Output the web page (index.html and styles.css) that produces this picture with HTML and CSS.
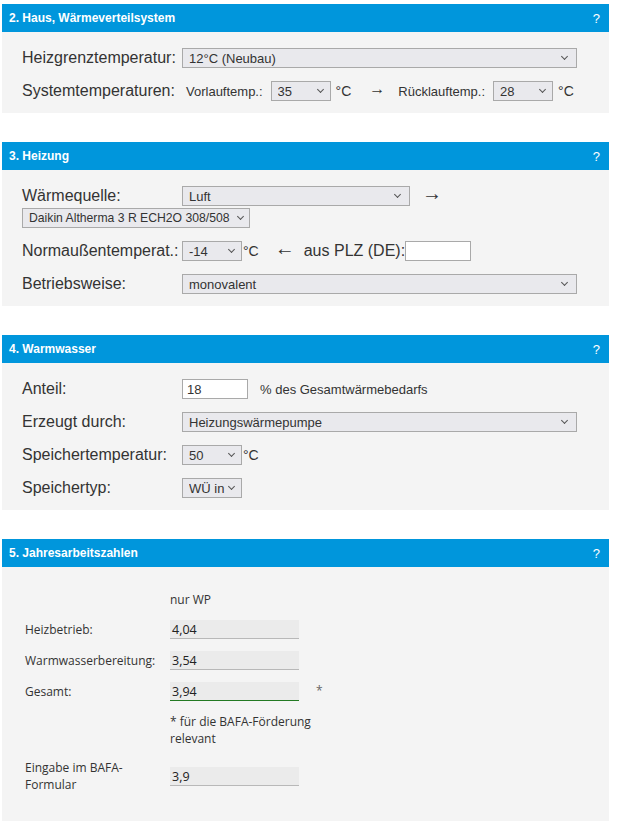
FILE: index.html
```html
<!DOCTYPE html>
<html lang="de">

<head>
  <meta charset="UTF-8" />
  <meta name="viewport" content="width=device-width, initial-scale=1.0" />
  <title>Wärmepumpen-Rechner</title>
  <link rel="stylesheet" href="styles.css">
</head>

<body>
  <div class="panel">
    <div class="panel-head"><span>2. Haus, Wärmeverteilsystem</span><span class="help">?</span></div>
    <div class="panel-body">
      <div class="row">
        <label class="lbl" for="heizgrenze">Heizgrenztemperatur:</label>
        <span class="sel w-full"><select id="heizgrenze"><option>12°C (Neubau)</option></select></span>
      </div>
      <div class="row">
        <span class="lbl">Systemtemperaturen:</span>
        <label class="sub first" for="vorlauf">Vorlauftemp.:</label>
        <span class="sel w-small"><select id="vorlauf"><option>35</option></select></span>
        <span class="unit">°C</span>
        <span class="arrow small">→</span>
        <label class="sub" for="ruecklauf">Rücklauftemp.:</label>
        <span class="sel w-small"><select id="ruecklauf"><option>28</option></select></span>
        <span class="unit">°C</span>
      </div>
    </div>
  </div>

  <div class="panel">
    <div class="panel-head"><span>3. Heizung</span><span class="help">?</span></div>
    <div class="panel-body">
      <div class="row tight">
        <label class="lbl" for="quelle">Wärmequelle:</label>
        <span class="sel w-mid"><select id="quelle"><option>Luft</option></select></span>
        <span class="arrow right">→</span>
      </div>
      <div class="row model">
        <span class="sel w-mid"><select><option>Daikin Altherma 3 R ECH2O 308/508</option></select></span>
      </div>
      <div class="row">
        <label class="lbl" for="nat">Normaußentemperat.:</label>
        <span class="sel w-small"><select id="nat"><option>-14</option></select></span>
        <span class="unit tight">°C</span>
        <span class="arrow left">←</span>
        <label class="plz" for="plz">aus PLZ (DE):</label>
        <input class="txt" type="text" id="plz" />
      </div>
      <div class="row">
        <label class="lbl" for="betrieb">Betriebsweise:</label>
        <span class="sel w-full"><select id="betrieb"><option>monovalent</option></select></span>
      </div>
    </div>
  </div>

  <div class="panel">
    <div class="panel-head"><span>4. Warmwasser</span><span class="help">?</span></div>
    <div class="panel-body">
      <div class="row">
        <label class="lbl" for="anteil">Anteil:</label>
        <input class="txt" type="text" id="anteil" value="18" />
        <span class="note">% des Gesamtwärmebedarfs</span>
      </div>
      <div class="row">
        <label class="lbl" for="erzeugt">Erzeugt durch:</label>
        <span class="sel w-full"><select id="erzeugt"><option>Heizungswärmepumpe</option></select></span>
      </div>
      <div class="row">
        <label class="lbl" for="speichertemp">Speichertemperatur:</label>
        <span class="sel w-small"><select id="speichertemp"><option>50</option></select></span>
        <span class="unit tight">°C</span>
      </div>
      <div class="row">
        <label class="lbl" for="speichertyp">Speichertyp:</label>
        <span class="sel w-small"><select id="speichertyp"><option>WÜ in</option></select></span>
      </div>
    </div>
  </div>

  <div class="panel">
    <div class="panel-head"><span>5. Jahresarbeitszahlen</span><span class="help">?</span></div>
    <div class="panel-body jaz">
      <span></span>
      <span class="jaz-head">nur WP</span>
      <span></span>

      <span class="jaz-lbl">Heizbetrieb:</span>
      <span class="jaz-val">4,04</span>
      <span></span>

      <span class="jaz-lbl">Warmwasserbereitung:</span>
      <span class="jaz-val">3,54</span>
      <span></span>

      <span class="jaz-lbl">Gesamt:</span>
      <span class="jaz-val total">3,94</span>
      <span class="star">*</span>

      <span></span>
      <span class="jaz-note">* für die BAFA-Förderung relevant</span>

      <span class="jaz-lbl">Eingabe im BAFA-Formular</span>
      <span class="jaz-val">3,9</span>
      <span></span>
    </div>
  </div>
</body>

</html>
```

FILE: styles.css
```css
body {
  margin: 4px 10px 0 2px;
  background: #fff;
  color: #333;
  font-family: "Liberation Sans", Arial, sans-serif;
}

.panel {
  width: 607px;
  margin-bottom: 29px;
  background: #f4f4f4;
}

.panel-head {
  display: flex;
  justify-content: space-between;
  align-items: center;
  height: 28px;
  padding: 0 9px 0 7px;
  background: #0096dc;
  color: #fff;
  font-size: 12px;
  font-weight: bold;
}

.panel-head .help {
  font-size: 13px;
  font-weight: normal;
}

.panel-body {
  padding: 16px 20px 12px 20px;
}

.row {
  display: flex;
  align-items: center;
  height: 20px;
  margin-bottom: 13px;
}

.row:last-child {
  margin-bottom: 0;
}

.row.tight {
  margin-bottom: 2px;
}

.lbl {
  width: 160px;
  flex-shrink: 0;
  font-size: 16px;
  color: #333;
}

.sub {
  font-size: 13px;
  margin-right: 8px;
}

.sub.first {
  margin-left: 4px;
}

.sel {
  position: relative;
  display: inline-block;
  height: 20px;
}

.sel::after {
  content: "";
  position: absolute;
  right: 10px;
  top: 50%;
  width: 4px;
  height: 4px;
  margin-top: -4px;
  border-right: 1px solid #555;
  border-bottom: 1px solid #555;
  transform: rotate(45deg);
  pointer-events: none;
}

.sel select {
  appearance: none;
  -webkit-appearance: none;
  box-sizing: border-box;
  width: 100%;
  height: 20px;
  margin: 0;
  padding: 0 20px 0 6px;
  border: 1px solid #a9a9a9;
  border-radius: 0;
  background: #e9e9ed;
  color: #333;
  font-family: "Liberation Sans", Arial, sans-serif;
  font-size: 13px;
}

.w-full {
  width: 395px;
}

.w-mid {
  width: 228px;
}

.w-small {
  width: 60px;
}

.w-small::after {
  right: 8px;
}

.w-small select {
  padding-right: 14px;
}

.row.model .sel::after {
  right: 7px;
}

.row.model .sel select {
  padding: 0 14px 0 6px;
  font-size: 12.2px;
}

.unit {
  margin-left: 5px;
  font-size: 14px;
}

.unit.tight {
  margin-left: 1px;
}

.arrow {
  font-family: "Liberation Sans", Arial, sans-serif;
  font-size: 20px;
  line-height: 20px;
  padding-bottom: 6px;
  color: #333;
}

.arrow.small {
  font-size: 16px;
  padding-bottom: 4px;
  margin: 0 13px 0 18px;
}

.arrow.right {
  margin-left: 12px;
}

.arrow.left {
  margin: 0 9px 0 16px;
}

.plz {
  font-size: 16px;
}

.txt {
  box-sizing: border-box;
  width: 66px;
  height: 20px;
  margin: 0;
  padding: 0 4px;
  border: 1px solid #a9a9a9;
  background: #fff;
  color: #333;
  font-family: "Liberation Sans", Arial, sans-serif;
  font-size: 13px;
}

.note {
  margin-left: 12px;
  font-size: 13px;
}

/* Jahresarbeitszahlen */
.jaz {
  display: grid;
  grid-template-columns: 145px 129px 40px;
  row-gap: 12px;
  align-items: center;
  padding: 24px 0 28px 23px;
  font-family: "Open Sans", "Segoe UI", sans-serif;
  font-size: 12px;
  line-height: 17px;
  color: #333;
}

.jaz-lbl {
  padding-right: 10px;
}

.jaz-val {
  box-sizing: border-box;
  height: 19px;
  padding-left: 2px;
  background: #ebebeb;
  border-bottom: 1px solid #b8b8b8;
  color: #222;
  font-size: 12.5px;
  line-height: 19px;
}

.jaz-val.total {
  border-bottom-color: #237a23;
}

.jaz-note {
  grid-column: 2 / 4;
}

.star {
  padding-left: 17px;
  color: #666;
  align-self: start;
}
```
